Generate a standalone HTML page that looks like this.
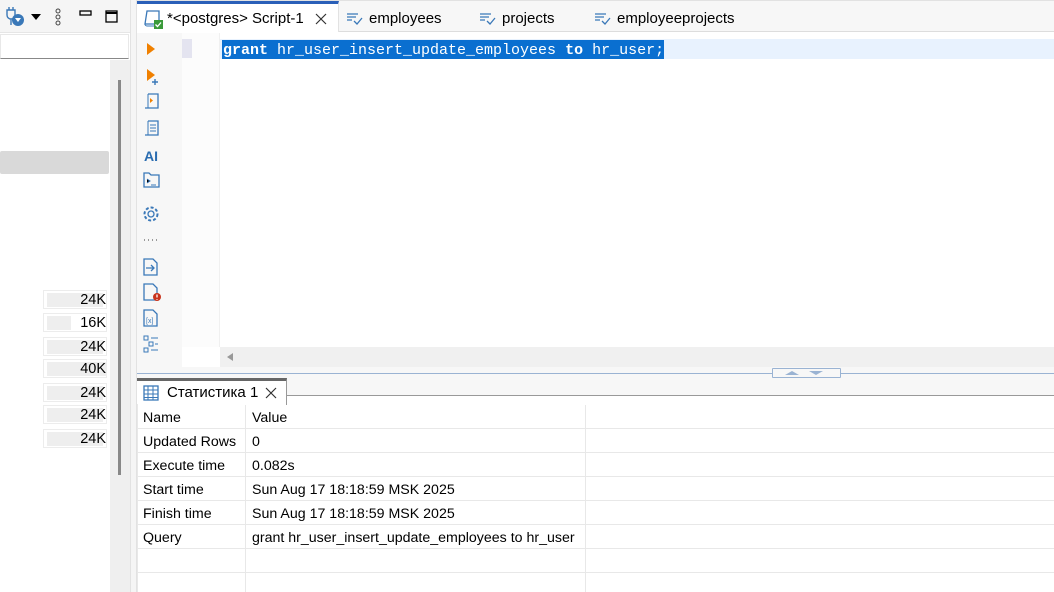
<!DOCTYPE html>
<html><head><meta charset="utf-8"><style>
*{box-sizing:border-box;margin:0;padding:0}
body{width:1054px;height:592px;overflow:hidden;background:#fff;font-family:"Segoe UI","Liberation Sans",sans-serif;font-size:14px;color:#000;position:relative}
.a{position:absolute}
.mono{font-family:"Liberation Mono",monospace;font-size:15px}
.k{font-weight:bold}
.sz{position:absolute;left:43px;width:64px;height:19px;border:1px solid #ececec;background:#fff}
.sz i{position:absolute;left:3px;top:2px;height:14px;background:#eee}
.sz span{position:absolute;right:0;top:1px;font-size:14.5px}
.row{position:absolute;left:137px;width:917px;height:24px;border-bottom:1px solid #e8e8e8}
.row span{position:absolute;top:5px;font-size:14.2px}
</style></head><body>
<!-- left panel -->
<div class="a" style="left:0;top:0;width:131px;height:33px;background:#f5f5f5;border-bottom:1px solid #e6e6e6"></div>
<svg class="a" style="left:4px;top:6px" width="120" height="22">
<path d="M3 4v5a4 4 0 0 0 8 0V4z M5 1v3 M9 1v3 M7 13v6" stroke="#3a78b8" stroke-width="1.4" fill="none"/>
<circle cx="14" cy="14" r="6" fill="#3a78b8"/><path d="M11 12h6l-3 4z" fill="#fff"/>
<path d="M27 8h10l-5 6z" fill="#000"/>
<circle cx="54" cy="5" r="2" stroke="#444" fill="none"/><circle cx="54" cy="11" r="2" stroke="#444" fill="none"/><circle cx="54" cy="17" r="2" stroke="#444" fill="none"/>
<rect x="76" y="5" width="11" height="4" stroke="#000" fill="none" stroke-width="1.3"/>
<rect x="102" y="5" width="11" height="11" stroke="#000" fill="none" stroke-width="1.3"/><path d="M102 7h11" stroke="#000" stroke-width="2"/>
</svg>
<div class="a" style="left:0;top:34px;width:129px;height:25px;background:#fff;border:1px solid #e8e8e8;border-bottom:1px solid #888"></div>
<div class="a" style="left:110px;top:60px;width:20px;height:532px;background:#efefef"></div>
<div class="a" style="left:118px;top:80px;width:3px;height:395px;background:#888"></div>
<div class="a" style="left:0;top:151px;width:109px;height:23px;background:#d9d9d9;border-radius:2px"></div>
<div class="sz" style="top:290px"><i style="width:56px"></i><span>24K</span></div>
<div class="sz" style="top:313px"><i style="width:24px"></i><span>16K</span></div>
<div class="sz" style="top:337px"><i style="width:56px"></i><span>24K</span></div>
<div class="sz" style="top:359px"><i style="width:60px"></i><span>40K</span></div>
<div class="sz" style="top:383px"><i style="width:56px"></i><span>24K</span></div>
<div class="sz" style="top:405px"><i style="width:56px"></i><span>24K</span></div>
<div class="sz" style="top:429px"><i style="width:56px"></i><span>24K</span></div>
<div class="a" style="left:130px;top:0;width:7px;height:592px;background:#f5f5f5;border-left:1px solid #e2e2e2;border-right:1px solid #e2e2e2"></div>
<!-- tabs -->
<div class="a" style="left:137px;top:0;width:917px;height:32px;background:#f7f7f7;border-top:1px solid #e2e2e2;border-bottom:1px solid #ddd"></div>
<div class="a" style="left:137px;top:1px;width:202px;height:31px;background:#fff;border-top:3px solid #2a5fb8;border-right:1px solid #e2e2e2"></div>
<svg class="a" style="left:143px;top:9px" width="22" height="20"><path d="M4 2h12v13H2z" stroke="#3a78b8" fill="none" stroke-width="1.3"/><path d="M2 15a2 2 0 0 0 2 2h8" stroke="#3a78b8" fill="none"/><rect x="11" y="11" width="9" height="9" fill="#3a9a3a"/><path d="M12.5 15.5l2 2 3.5-4" stroke="#fff" fill="none" stroke-width="1.3"/></svg>
<div class="a" style="left:167px;top:10px;font-size:15px">*&lt;postgres&gt; Script-1</div>
<svg class="a" style="left:315px;top:13px" width="12" height="12"><path d="M1 1l10 10M11 1L1 11" stroke="#333" stroke-width="1.2"/></svg>
<svg class="a" style="left:346px;top:12px" width="18" height="14"><path d="M1 2h11M1 5h9M1 8h5" stroke="#3a78b8" stroke-width="1.2"/><path d="M8 9l3 3 5-6" stroke="#3a78b8" fill="none" stroke-width="1.3"/></svg>
<div class="a" style="left:369px;top:10px;font-size:15px">employees</div>
<svg class="a" style="left:479px;top:12px" width="18" height="14"><path d="M1 2h11M1 5h9M1 8h5" stroke="#3a78b8" stroke-width="1.2"/><path d="M8 9l3 3 5-6" stroke="#3a78b8" fill="none" stroke-width="1.3"/></svg>
<div class="a" style="left:502px;top:10px;font-size:15px">projects</div>
<svg class="a" style="left:594px;top:12px" width="18" height="14"><path d="M1 2h11M1 5h9M1 8h5" stroke="#3a78b8" stroke-width="1.2"/><path d="M8 9l3 3 5-6" stroke="#3a78b8" fill="none" stroke-width="1.3"/></svg>
<div class="a" style="left:617px;top:10px;font-size:15px">employeeprojects</div>
<!-- editor -->
<div class="a" style="left:137px;top:33px;width:45px;height:337px;background:#f7f7f7"></div>
<div class="a" style="left:182px;top:33px;width:38px;height:314px;background:#fcfcfc;border-right:1px solid #f0f0f0"></div>
<div class="a" style="left:182px;top:39px;width:10px;height:19px;background:#e4e4f0"></div>
<div class="a" style="left:220px;top:39px;width:834px;height:20px;background:#e8f2fe"></div>
<div class="a" style="left:222px;top:40px;width:442px;height:19px;background:#0a6fd0"></div>
<div class="a mono" style="left:223px;top:41px;color:#fff;line-height:19px"><span class="k">grant</span> hr_user_insert_update_employees <span class="k">to</span> hr_user;</div>
<svg class="a" style="left:140px;top:38px" width="26" height="320">
<path d="M7 5l8 6-8 6z" fill="#f08000"/>
<path d="M7 31l8 6-8 6z" fill="#f08000"/><path d="M12 44h6M15 41v6" stroke="#3a78b8" stroke-width="1.4"/>
<path d="M8 56h10v14H5" stroke="#3a78b8" fill="none" stroke-width="1.3"/><path d="M8 56v14" stroke="#3a78b8"/><path d="M10 60l3 2.5-3 2.5z" fill="#f08000"/>
<path d="M8 83h10v14H5" stroke="#3a78b8" fill="none" stroke-width="1.3"/><path d="M8 83v14M10 87h6M10 90h6M10 93h6" stroke="#3a78b8"/>
<text x="4" y="123" font-family="Liberation Sans" font-weight="bold" font-size="14" fill="#2a6cb0">AI</text>
<path d="M4 135h5l2 2h8v12H4z" stroke="#3a78b8" fill="none" stroke-width="1.3"/><path d="M7 141l3 2-3 2M11 147h5" stroke="#3a78b8"/>
<circle cx="11" cy="176" r="3" stroke="#3a78b8" fill="none" stroke-width="1.3"/><circle cx="11" cy="176" r="6.5" stroke="#3a78b8" fill="none" stroke-width="2" stroke-dasharray="3 2"/>
<path d="M4 202h1M8 202h1M12 202h1M16 202h1" stroke="#999" stroke-width="2"/>
<path d="M4 221h9l4 4v12H4z" stroke="#3a78b8" fill="none" stroke-width="1.3"/><path d="M6 230h8M11 227l3 3-3 3" stroke="#3a78b8" fill="none" stroke-width="1.3"/>
<path d="M4 246h9l4 4v12H4z" stroke="#3a78b8" fill="none" stroke-width="1.3"/><circle cx="17" cy="259" r="4" fill="#c8331c"/><path d="M17 256.5v3M17 261v.8" stroke="#fff" stroke-width="1.3"/>
<path d="M4 272h9l4 4v12H4z" stroke="#3a78b8" fill="none" stroke-width="1.3"/><text x="6" y="285" font-size="7" fill="#3a78b8">[x]</text>
<rect x="4" y="298" width="4" height="4" stroke="#3a78b8" fill="none"/><rect x="9" y="304" width="4" height="4" stroke="#3a78b8" fill="none"/><rect x="4" y="310" width="4" height="4" stroke="#3a78b8" fill="none"/><path d="M11 300h7M15 306h3M11 312h7" stroke="#3a78b8"/>
</svg>
<div class="a" style="left:220px;top:347px;width:834px;height:20px;background:#f0f0f0"></div>
<svg class="a" style="left:225px;top:352px" width="10" height="10"><path d="M8 1v8L2 5z" fill="#999"/></svg>
<div class="a" style="left:137px;top:367px;width:917px;height:29px;background:#f7f7f7;border-bottom:1px solid #999"></div>
<div class="a" style="left:137px;top:373px;width:917px;height:1px;background:#9ab3d3"></div>
<div class="a" style="left:772px;top:368px;width:69px;height:10px;background:#f7f7f7;border:1px solid #9ab3d3;border-radius:1px"></div>
<svg class="a" style="left:784px;top:370px" width="46" height="6"><path d="M1 5l7-4 7 4z M25 1h14l-7 4z" fill="#9ab3d3"/></svg>
<!-- bottom tab -->
<div class="a" style="left:137px;top:378px;width:150px;height:27px;background:#fff;border-top:3px solid #666;border-right:1px solid #999"></div>
<svg class="a" style="left:143px;top:385px" width="16" height="16"><rect x="1" y="1" width="14" height="14" stroke="#3a78b8" fill="none" stroke-width="1.3"/><path d="M1 5h14M1 9h14M1 12.5h14M5 1v14M10 1v14" stroke="#3a78b8"/></svg>
<div class="a" style="left:167px;top:384px;font-size:15px">Статистика 1</div>
<svg class="a" style="left:265px;top:387px" width="12" height="12"><path d="M1 1l10 10M11 1L1 11" stroke="#333" stroke-width="1.2"/></svg>
<!-- table -->
<div class="a" style="left:137px;top:404px;width:917px;height:188px;border-left:1px solid #e8e8e8"></div>
<div class="row" style="top:405px"><span style="left:6px">Name</span><span style="left:115px">Value</span></div>
<div class="row" style="top:429px"><span style="left:6px">Updated Rows</span><span style="left:115px">0</span></div>
<div class="row" style="top:453px"><span style="left:6px">Execute time</span><span style="left:115px">0.082s</span></div>
<div class="row" style="top:477px"><span style="left:6px">Start time</span><span style="left:115px">Sun Aug 17 18:18:59 MSK 2025</span></div>
<div class="row" style="top:501px"><span style="left:6px">Finish time</span><span style="left:115px">Sun Aug 17 18:18:59 MSK 2025</span></div>
<div class="row" style="top:525px"><span style="left:6px">Query</span><span style="left:115px">grant hr_user_insert_update_employees to hr_user</span></div>
<div class="row" style="top:549px"></div>
<div class="a" style="left:245px;top:405px;width:1px;height:187px;background:#e8e8e8"></div>
<div class="a" style="left:585px;top:405px;width:1px;height:187px;background:#e8e8e8"></div>
</body></html>
